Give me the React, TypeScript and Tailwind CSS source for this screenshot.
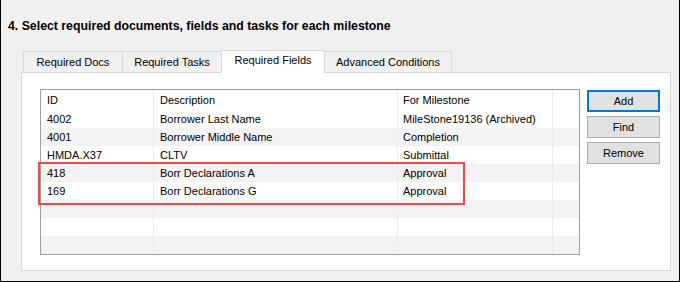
import React from "react";

const rows = [
  { id: "4002", desc: "Borrower Last Name", ms: "MileStone19136 (Archived)" },
  { id: "4001", desc: "Borrower Middle Name", ms: "Completion" },
  { id: "HMDA.X37", desc: "CLTV", ms: "Submittal" },
  { id: "418", desc: "Borr Declarations A", ms: "Approval" },
  { id: "169", desc: "Borr Declarations G", ms: "Approval" },
  { id: "", desc: "", ms: "" },
  { id: "", desc: "", ms: "" },
  { id: "", desc: "", ms: "" },
];

const tabs = ["Required Docs", "Required Tasks", "Required Fields", "Advanced Conditions"];

function Row({ id, desc, ms, shaded }: { id: string; desc: string; ms: string; shaded?: boolean }) {
  return (
    <div className={`flex h-[18px] items-center ${shaded ? "bg-[#f3f3f3]" : "bg-white"}`}>
      <div className="w-[113px] h-full flex items-center pl-[6px] border-r border-[#ebebeb]">{id}</div>
      <div className="w-[244px] h-full flex items-center pl-[6px] border-r border-[#ebebeb]">{desc}</div>
      <div className="w-[155px] h-full flex items-center pl-[5px] border-r border-[#ebebeb]">{ms}</div>
      <div className="flex-1 h-full" />
    </div>
  );
}

export default function App() {
  return (
    <div className="relative w-[680px] h-[282px] bg-[#f0f0f0] border-x border-b border-black font-['Liberation_Sans',Arial,sans-serif] text-[11px] text-black">
      <div className="h-[50px] pt-[17px] pl-[7px] text-[12.3px] font-bold">
        4. Select required documents, fields and tasks for each milestone
      </div>

      <div className="ml-[20px]">
        <div className="flex items-end h-[22px] pl-[2px]">
          {tabs.map((t, i) => {
            const active = i === 2;
            const w = ["w-[100px]", "w-[100px]", "w-[104px]", "w-[128px]"][i];
            return (
              <div
                key={t}
                className={`${w} ${i > 0 ? "-ml-px" : ""} ${
                  active
                    ? "relative z-10 h-[23px] -mb-px bg-white border-x border-t border-[#d9d9d9] pb-[3px]"
                    : "h-[21px] bg-[#f0f0f0] border-x border-t border-[#d9d9d9]"
                } flex items-center justify-center`}
              >
                {t}
              </div>
            );
          })}
        </div>

        <div className="w-[650px] h-[199px] bg-white border border-[#d9d9d9] flex items-start pt-[16px] pl-[18px] gap-[7px]">
          <div className="w-[540px] h-[166px] border border-[#a0a0a0] overflow-hidden">
            <div className="flex h-[20px] items-center bg-white">
              <div className="w-[113px] h-full flex items-center pl-[6px] border-r border-[#ebebeb]">ID</div>
              <div className="w-[244px] h-full flex items-center pl-[6px] border-r border-[#ebebeb]">Description</div>
              <div className="w-[155px] h-full flex items-center pl-[5px] border-r border-[#ebebeb]">For Milestone</div>
              <div className="flex-1 h-full" />
            </div>
            {rows.map((r, i) => (
              <Row key={i} {...r} shaded={i % 2 === 1} />
            ))}
          </div>

          <div className="flex flex-col gap-[4px] pt-px">
            <button className="w-[73px] h-[22px] bg-[#e1e1e1] border-2 border-[#0078d7] flex items-center justify-center">
              Add
            </button>
            <button className="w-[73px] h-[22px] bg-[#e1e1e1] border border-[#adadad] flex items-center justify-center">
              Find
            </button>
            <button className="w-[73px] h-[22px] bg-[#e1e1e1] border border-[#adadad] flex items-center justify-center">
              Remove
            </button>
          </div>
        </div>
      </div>

      <div className="absolute left-[37px] top-[162px] w-[427px] h-[43px] border-2 border-[#f04848] pointer-events-none" />
    </div>
  );
}
